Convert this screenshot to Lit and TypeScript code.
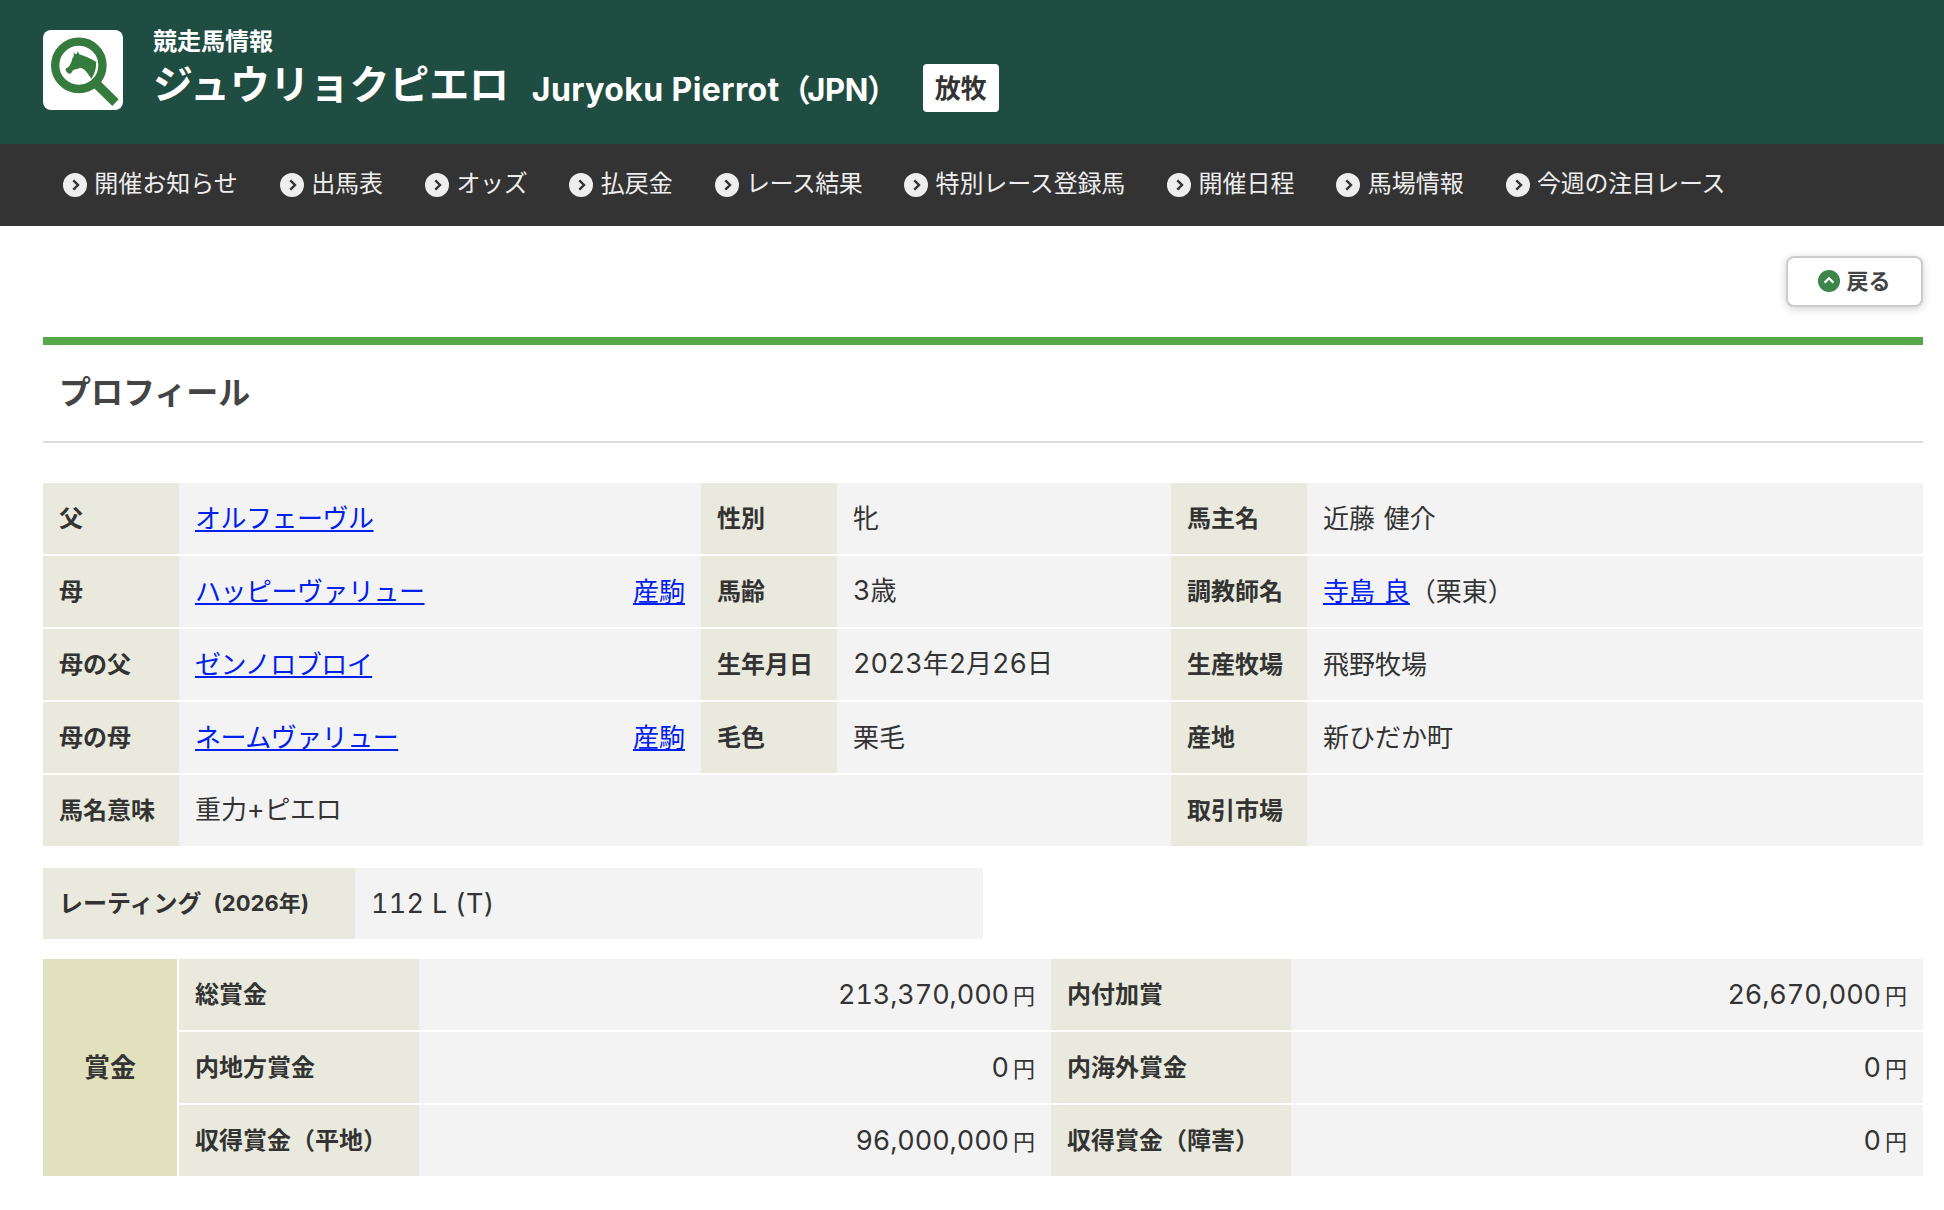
import { LitElement, html, css, nothing, TemplateResult } from "lit";
import { customElement } from "lit/decorators.js";

type Tight = "" | "slight" | "tight" | "tighter";

const NAV: Array<{ label: string; tight: Tight }> = [
  { label: "開催お知らせ", tight: "" },
  { label: "出馬表", tight: "" },
  { label: "オッズ", tight: "tighter" },
  { label: "払戻金", tight: "" },
  { label: "レース結果", tight: "tight" },
  { label: "特別レース登録馬", tight: "slight" },
  { label: "開催日程", tight: "" },
  { label: "馬場情報", tight: "" },
  { label: "今週の注目レース", tight: "tighter" },
];

const num = (s: string) => html`<span class="num">${s}</span>`;
const link = (s: string) => html`<a class="link" href="#">${s}</a>`;

interface Cell {
  label: string;
  value: TemplateResult | string;
  extra?: boolean;
  wide?: boolean;
}

const PROFILE: Cell[] = [
  { label: "父", value: link("オルフェーヴル") },
  { label: "性別", value: "牝" },
  { label: "馬主名", value: "近藤 健介" },
  { label: "母", value: link("ハッピーヴァリュー"), extra: true },
  { label: "馬齢", value: html`${num("3")}歳` },
  { label: "調教師名", value: html`<a class="link plain" href="#">寺島 良</a>（栗東）` },
  { label: "母の父", value: link("ゼンノロブロイ") },
  { label: "生年月日", value: html`${num("2023")}年${num("2")}月${num("26")}日` },
  { label: "生産牧場", value: "飛野牧場" },
  { label: "母の母", value: link("ネームヴァリュー"), extra: true },
  { label: "毛色", value: "栗毛" },
  { label: "産地", value: "新ひだか町" },
  { label: "馬名意味", value: html`重力${num("+")}<span class="kana">ピエロ</span>`, wide: true },
  { label: "取引市場", value: "" },
];

const PRIZES: Array<[string, string]> = [
  ["総賞金", "213,370,000"],
  ["内付加賞", "26,670,000"],
  ["内地方賞金", "0"],
  ["内海外賞金", "0"],
  ["収得賞金（平地）", "96,000,000"],
  ["収得賞金（障害）", "0"],
];

@customElement("app-root")
export class AppRoot extends LitElement {
  static styles = css`
    :host {
      display: block;
      min-height: 1210px;
      background: #fff;
      color: #333;
      font-family: "Noto Sans CJK JP", sans-serif;
      font-size: 26px;
      line-height: 1;
      text-spacing-trim: space-all;
    }
    * { box-sizing: border-box; }
    h1, h2, p, dl, dd, dt { margin: 0; font-weight: inherit; font-size: inherit; }

    .header {
      display: flex;
      align-items: flex-start;
      height: 144px;
      padding: 27px 43px 0;
      background: #1f4d42;
      color: #fff;
      font-weight: 700;
    }
    .logo { width: 80px; height: 80px; margin: 3px 30px 0 0; display: block; flex: none; }
    .kind { font-size: 24px; line-height: 26px; }
    .title { display: flex; align-items: flex-start; }
    .name { font-size: 40px; line-height: 58px; letter-spacing: -0.15px; }
    .english {
      flex: none;
      width: 363px;
      font-family: Inter, "Noto Sans CJK JP", sans-serif;
      font-size: 32px;
      line-height: 74px;
      margin-left: 23px;
      white-space: nowrap;
      letter-spacing: 0.4px;
    }
    .country { font-size: 31px; letter-spacing: -0.4px; }
    .open { margin-right: -3px; }
    .close { margin-left: -1px; }
    .status {
      margin: 11px 0 0 28px;
      height: 48px;
      line-height: 45px;
      padding: 0 12px;
      background: #fff;
      color: #333;
      border-radius: 4px;
    }

    .nav {
      display: flex;
      align-items: center;
      gap: 42px;
      height: 82px;
      padding: 0 63px;
      background: #333;
      color: #eee;
      font-size: 24px;
      white-space: nowrap;
    }
    .item { display: flex; align-items: center; gap: 7.3px; color: inherit; text-decoration: none; }
    .item span { padding-bottom: 6px; }
    .item svg { width: 24px; height: 24px; display: block; }
    .slight { letter-spacing: -0.15px; }
    .tight { letter-spacing: -0.5px; }
    .tighter { letter-spacing: -0.35px; }

    .main { padding: 30px 21px 0 43px; }
    .tools { display: flex; justify-content: flex-end; height: 81px; }
    .back {
      display: flex;
      align-items: center;
      justify-content: center;
      gap: 6px;
      width: 137px;
      height: 51px;
      padding-bottom: 2px;
      border: 2px solid #ccc;
      border-radius: 8px;
      background: #fff;
      box-shadow: 0 2px 8px rgba(0, 0, 0, 0.18);
      color: #444;
      font: inherit;
      font-size: 22px;
      font-weight: 700;
    }
    .back span { padding-bottom: 5px; }
    .back svg { width: 22px; height: 22px; display: block; }

    .heading {
      display: flex;
      align-items: center;
      height: 106px;
      padding: 0 16px 6px;
      border-top: 8px solid #54a84a;
      border-bottom: 2px solid #ddd;
      color: #444;
      font-size: 32px;
      font-weight: 700;
    }

    .profile {
      display: grid;
      grid-template-columns: 136px 522px 136px 334px 136px 616px;
      grid-auto-rows: 71px;
      row-gap: 2px;
      margin-top: 40px;
    }
    .label, .value { display: flex; align-items: center; padding: 0 16px 4px; white-space: nowrap; }
    .label { background: #e9eadd; font-size: 24px; font-weight: 700; }
    .value { background: #f3f3f3; word-spacing: 3px; }
    .wide { grid-column: span 3; }
    .push { margin-left: auto; }
    .link {
      color: #0020ee;
      text-decoration: underline;
      text-decoration-thickness: 2px;
      text-underline-offset: 2px;
      text-decoration-skip-ink: none;
      letter-spacing: -0.5px;
    }
    .plain { letter-spacing: 0; }
    .kana { letter-spacing: -0.4px; }
    .num {
      font-family: Inter, sans-serif;
      font-size: 27px;
      font-variant-numeric: tabular-nums;
      letter-spacing: -0.1px;
      word-spacing: 0;
    }

    .rating { display: grid; grid-template-columns: 312px 628px; height: 71px; margin-top: 22px; }
    .rating .value { padding-bottom: 0; }
    .rating .num { letter-spacing: 0.3px; }
    .year { font-family: Inter, "Noto Sans CJK JP", sans-serif; font-size: 22px; margin: 2px 0 0 12px; }

    .prizes {
      display: grid;
      grid-template-columns: 136px 240px 632px 240px 632px;
      grid-template-rows: repeat(3, 71px);
      row-gap: 2px;
      margin-top: 20px;
    }
    .group {
      grid-row: span 3;
      display: flex;
      align-items: center;
      justify-content: center;
      margin-right: 2px;
      padding-bottom: 3px;
      background: #e1e1be;
      font-weight: 700;
    }
    .amount { justify-content: flex-end; align-items: baseline; padding-bottom: 0; line-height: 71px; }
    .unit { font-size: 22px; margin-left: 4px; }
  `;

  private chevron(): TemplateResult {
    return html`<svg viewBox="0 0 24 24" aria-hidden="true">
      <circle cx="12" cy="12" r="12" fill="#eee"></circle>
      <path d="M10.3 7.4 L15 12 L10.3 16.6" fill="none" stroke="#333" stroke-width="2.4"></path>
    </svg>`;
  }

  private logo(): TemplateResult {
    return html`<svg class="logo" viewBox="129 90 240 240" aria-hidden="true">
      <rect x="129" y="90" width="240" height="240" rx="24" fill="#fff"></rect>
      <circle cx="236.5" cy="196" r="71" fill="none" stroke="#367b3e" stroke-width="25"></circle>
      <path fill="#367b3e" d="M301 244 L356 298 L337 318 L281 263 Z"></path>
      <path
        fill="#367b3e"
        d="M221 157 L225 162 L230 162 L233 154 L238 163 C255 168 272 176 289 186 C287 192 289 198 287 205 C285 216 281 226 274 236 C268 227 261 216 253 209 C248 205 244 203 240 203 C233 208 227 206 220 210 C216 214 215 220 210 221 L204 220 C200 216 197 213 197 208 L199 204 C207 203 209 195 214 187 C216 180 216 174 221 170 Z"
      ></path>
    </svg>`;
  }

  render() {
    return html`
      <header class="header">
        ${this.logo()}
        <div>
          <p class="kind">競走馬情報</p>
          <h1 class="title">
            <span class="name">ジュウリョクピエロ</span>
            <span class="english"
              >Juryoku Pierrot<span class="country"><span class="open">（</span>JPN<span class="close">）</span></span></span
            >
            <span class="status">放牧</span>
          </h1>
        </div>
      </header>
      <nav class="nav">
        ${NAV.map((n) => html`<a class="item" href="#">${this.chevron()}<span class=${n.tight || nothing}>${n.label}</span></a>`)}
      </nav>
      <main class="main">
        <div class="tools">
          <button class="back">
            <svg viewBox="0 0 22 22" aria-hidden="true">
              <circle cx="11" cy="11" r="11" fill="#3d8549"></circle>
              <path d="M6.6 12.6 L11 8.3 L15.4 12.6" fill="none" stroke="#fff" stroke-width="2.2"></path>
            </svg>
            <span>戻る</span>
          </button>
        </div>
        <h2 class="heading">プロフィール</h2>
        <dl class="profile">
          ${PROFILE.map(
            (c) => html`<dt class="label">${c.label}</dt>
              <dd class="value ${c.wide ? "wide" : ""}">
                <span>${c.value}</span>
                ${c.extra ? html`<a class="link plain push" href="#">産駒</a>` : nothing}
              </dd>`
          )}
        </dl>
        <dl class="rating">
          <dt class="label">レーティング<span class="year">(2026年)</span></dt>
          <dd class="value">${num("112 L (T)")}</dd>
        </dl>
        <dl class="prizes">
          <dt class="group">賞金</dt>
          ${PRIZES.map(
            ([label, amount]) => html`<dt class="label">${label}</dt>
              <dd class="value amount">${num(amount)}<span class="unit">円</span></dd>`
          )}
        </dl>
      </main>
    `;
  }
}
